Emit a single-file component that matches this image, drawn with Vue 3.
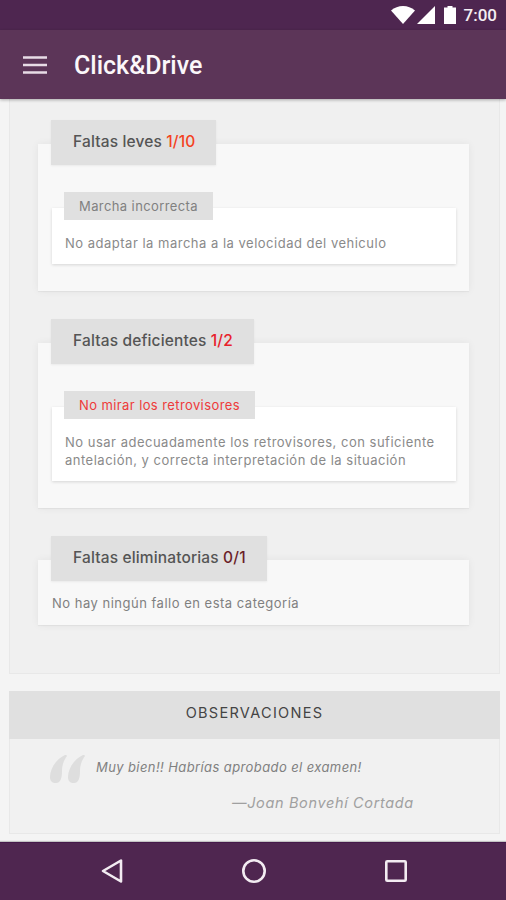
<template>
  <div class="phone">
    <div class="status-bar">
      <svg class="st-wifi" viewBox="0 0 24 18" width="24" height="18"><path d="M0 4.500C3.500 1.500 7.500 0 12 0s8.500 1.500 12 4.500L12 18z" fill="#fff"/></svg>
      <svg class="st-signal" viewBox="0 0 18 18" width="18" height="18"><path d="M0 18L18 0v18z" fill="#fff"/></svg>
      <svg class="st-battery" viewBox="0 0 12 18" width="12" height="18"><path d="M3.500 0h5v1.500H12V18H0V1.500h3.500z" fill="#fff"/></svg>
      <span class="st-time">7:00</span>
    </div>
    <header class="app-bar">
      <svg class="menu" viewBox="0 0 24 18" width="24" height="18">
        <path d="M0 1.500h24M0 9h24M0 16.500h24" stroke="#e8dce6" stroke-width="2.400" fill="none"/>
      </svg>
      <h1>Click&amp;Drive</h1>
    </header>

    <main class="content">
      <section class="panel">
        <div class="group" v-for="g in groups" :key="g.title">
          <div class="group-tab">
            {{ g.title }} <span :class="g.countClass">{{ g.count }}</span>
          </div>
          <div class="group-card" :class="{ empty: !g.fault }">
            <div v-if="g.fault" class="fault">
              <div class="fault-tag" :class="{ red: g.red }">{{ g.fault }}</div>
              <div class="fault-body">
                <p v-for="line in g.lines" :key="line">{{ line }}</p>
              </div>
            </div>
            <p v-else class="none">No hay ningún fallo en esta categoría</p>
          </div>
        </div>
      </section>

      <section class="notes">
        <div class="notes-head">OBSERVACIONES</div>
        <div class="notes-body">
          <div class="quote-row">
            <svg class="quote-mark" viewBox="0 0 36 28" width="36" height="28">
              <path d="M15 0c1 0 2 0 2 1-3 4-5 9-5 15 0 6-1 12-6 12-4 0-6-2-6-6C0 14 6 4 15 0z" fill="#dedede"/>
              <path d="M33 0c1 0 2 0 2 1-3 4-5 9-5 15 0 6-1 12-6 12-4 0-6-2-6-6 0-8 6-18 15-22z" fill="#dedede"/>
            </svg>
            <p class="quote">Muy bien!! Habrías aprobado el examen!</p>
          </div>
          <p class="author">—Joan Bonvehí Cortada</p>
        </div>
      </section>
    </main>

    <nav class="nav-bar">
      <svg viewBox="0 0 24 26" width="24" height="26"><path d="M21 2.500v21L3 13z" fill="none" stroke="#f3ecf2" stroke-width="2.600" stroke-linejoin="round"/></svg>
      <svg viewBox="0 0 26 26" width="26" height="26"><circle cx="13" cy="13" r="10.700" fill="none" stroke="#f3ecf2" stroke-width="2.600"/></svg>
      <svg viewBox="0 0 24 24" width="24" height="24"><rect x="2.300" y="2.300" width="19.400" height="19.400" rx="1" fill="none" stroke="#f3ecf2" stroke-width="2.600"/></svg>
    </nav>
  </div>
</template>

<script setup>
const groups = [
  {
    title: 'Faltas leves',
    count: '1/10',
    countClass: 'orange',
    fault: 'Marcha incorrecta',
    lines: ['No adaptar la marcha a la velocidad del vehiculo']
  },
  {
    title: 'Faltas deficientes',
    count: '1/2',
    countClass: 'crimson',
    fault: 'No mirar los retrovisores',
    red: true,
    lines: [
      'No usar adecuadamente los retrovisores, con suficiente',
      'antelación, y correcta interpretación de la situación'
    ]
  },
  {
    title: 'Faltas eliminatorias',
    count: '0/1',
    countClass: 'dark',
    fault: null
  }
]
</script>

<style>
html, body { margin: 0; background: #f4f4f4; }
</style>

<style scoped>
.phone {
  width: 506px; height: 900px; overflow: hidden;
  display: flex; flex-direction: column;
  background: #f4f4f4;
  font-family: Inter, "Open Sans", sans-serif;
}
.status-bar {
  height: 30px; flex: none; background: #4e2650;
  display: flex; align-items: center; justify-content: flex-end;
  padding-right: 9px; box-sizing: border-box;
}
.st-wifi { margin-right: 1px; }
.st-signal { margin-left: 1px; margin-right: 9px; }
.st-time {
  margin-left: 8px; color: #f4eef3; font: 500 17px Roboto, sans-serif;
}
.app-bar {
  height: 69px; flex: none; background: #5c3558;
  display: flex; align-items: center; padding-left: 23px;
  box-shadow: 0 1px 3px rgba(0, 0, 0, .3); position: relative; z-index: 1;
}
.app-bar h1 {
  margin: 2px 0 0 27px; color: #fbf7fa;
  font: 500 25px Roboto, sans-serif;
}
.content { flex: 1; min-height: 0; padding: 0 6px 0 9px; }
.panel {
  height: 575px; box-sizing: border-box; padding: 21px 30px 0 28px;
  border: 1px solid #e8e8e8; border-top: 0; background: #f0f0f0;
}
.group { margin-bottom: 28px; }
.group-tab {
  width: fit-content; position: relative; z-index: 1;
  height: 45px; line-height: 43px; box-sizing: border-box;
  margin-left: 13px; padding: 0 21px 0 22px;
  background: #e0e0e0; color: #555;
  font-size: 15.500px; font-weight: 500; white-space: nowrap;
  letter-spacing: .15px;
  box-shadow: 0 1px 2px rgba(0, 0, 0, .06);
}
.orange { color: #f4421e; }
.crimson { color: #e8222c; }
.dark { color: #6b1f28; }
.group-card {
  margin-top: -21px; padding: 48px 13px 27px 14px;
  background: #f8f8f8;
  box-shadow: 0 0 8px rgba(0, 0, 0, .06), 0 1px 1px rgba(0, 0, 0, .04);
}
.group-card.empty { padding: 35px 13px 12.500px 14px; }
.fault-tag {
  width: fit-content; position: relative; z-index: 1;
  height: 28px; line-height: 28px; box-sizing: border-box;
  margin-left: 12px; padding: 0 15px;
  background: #e0e0e0; color: #808080;
  font-size: 13px; white-space: nowrap; letter-spacing: .4px;
}
.fault-tag.red { color: #ee3a3a; }
.fault-body {
  margin-top: -12px; padding: 26px 13px 12px;
  background: #fff;
  box-shadow: 0 1px 3px rgba(0, 0, 0, .14);
}
.fault-body p, .none {
  margin: 0; font-size: 13px; line-height: 18px; color: #8a8a8a;
  white-space: nowrap; letter-spacing: .5px;
}
.none { color: #808080; line-height: 17.500px; }
.notes { margin-top: 17px; }
.notes-head {
  height: 48px; line-height: 44px; text-align: center;
  background: #e0e0e0; color: #444;
  font-size: 14.500px; letter-spacing: 1.3px;
}
.notes-body {
  height: 95px; box-sizing: border-box; padding: 16px 0 0 40px;
  border: 1px solid #e8e8e8; border-top: 0; background: #f1f1f1;
}
.quote-row { display: flex; align-items: flex-start; }
.quote {
  margin: 4px 0 0 10px; font-size: 13px; font-style: italic; color: #808080; letter-spacing: .4px;
}
.author {
  margin: 11px 0 0 182px; font-size: 14.500px; font-style: italic; color: #a0a0a0; letter-spacing: .65px;
}
.nav-bar {
  height: 58px; flex: none; background: #4f2650; padding: 0 98px 1px 100px;
  box-sizing: border-box; border-top: 1px solid #45194a;
  box-shadow: 0 -1px 1px rgba(0, 0, 0, .2); position: relative;
  display: flex; align-items: center; justify-content: space-between;
}
</style>
